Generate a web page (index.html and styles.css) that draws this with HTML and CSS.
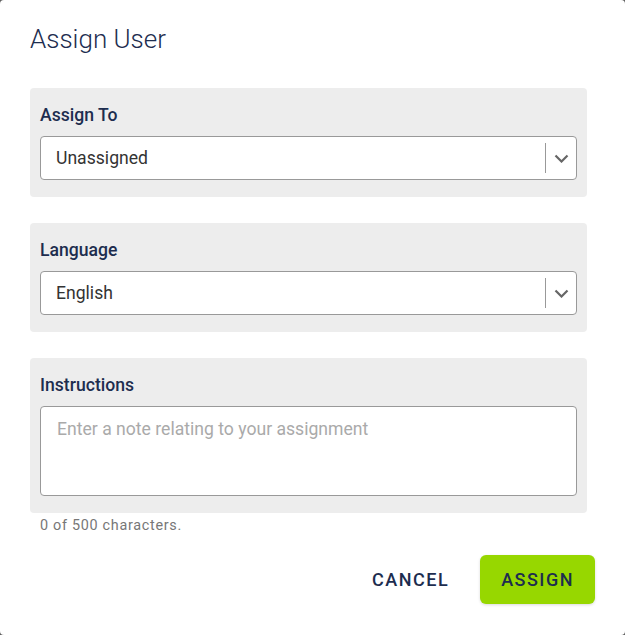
FILE: index.html
```html
<!DOCTYPE html>
<html lang="en">
<head>
    <meta charset="UTF-8">
    <title>Assign User</title>
    <link rel="stylesheet" href="styles.css">
</head>
<body>
    <div class="dialog">
        <h1 class="dialog-title">Assign User</h1>

        <!-- Assign to -->
        <div class="field">
            <label class="field-label">Assign To</label>
            <div class="select">
                <span class="select-value">Unassigned</span>
                <span class="select-arrow">
                    <svg width="15" height="9" viewBox="0 0 15 9"><polyline points="1.5,1.5 7.5,7.5 13.5,1.5" fill="none" stroke="#666" stroke-width="2.2"/></svg>
                </span>
            </div>
        </div>

        <!-- Language -->
        <div class="field">
            <label class="field-label">Language</label>
            <div class="select">
                <span class="select-value">English</span>
                <span class="select-arrow">
                    <svg width="15" height="9" viewBox="0 0 15 9"><polyline points="1.5,1.5 7.5,7.5 13.5,1.5" fill="none" stroke="#666" stroke-width="2.2"/></svg>
                </span>
            </div>
        </div>

        <!-- Instructions -->
        <div class="field field-last">
            <label class="field-label">Instructions</label>
            <textarea class="textarea" placeholder="Enter a note relating to your assignment"></textarea>
        </div>
        <p class="counter">0 of 500 characters.</p>

        <div class="actions">
            <button class="btn btn-text">CANCEL</button>
            <button class="btn btn-primary">ASSIGN</button>
        </div>
    </div>
</body>
</html>
```

FILE: styles.css
```css
/* General Styles */
body {
    margin: 0;
    background: #5f5f5f;
    font-family: Roboto, "Liberation Sans", sans-serif;
}

.dialog {
    height: 635px;
    box-sizing: border-box;
    background: #fff;
    border-radius: 4px;
    padding: 21px 30px 0;
}

.dialog-title {
    margin: 0 0 31px;
    font-size: 26px;
    line-height: 36px;
    font-weight: 300;
    color: #1d2d4f;
}

/* Fields */
.field {
    background: #ededed;
    border-radius: 4px;
    padding: 17px 10px;
    margin: 0 8px 26px 0;
    display: flex;
    flex-direction: column;
}

.field-last { margin-bottom: 0; }

.field-label {
    font-size: 17.6px;
    line-height: 20px;
    font-weight: 500;
    color: #1d2d4f;
    margin-bottom: 11px;
}

.select {
    height: 44px;
    box-sizing: border-box;
    background: #fff;
    border: 1px solid #999;
    border-radius: 4px;
    display: flex;
    align-items: center;
}

.select-value {
    flex: 1;
    padding-left: 15px;
    font-size: 17.6px;
    color: #333;
}

.select-arrow {
    width: 30px;
    height: 30px;
    border-left: 1px solid #999;
    display: flex;
    align-items: center;
    justify-content: center;
}

.textarea {
    display: block;
    height: 90px;
    box-sizing: border-box;
    border: 1px solid #999;
    border-radius: 4px;
    padding: 11px 16px;
    font-family: Roboto, "Liberation Sans", sans-serif;
    font-size: 17.6px;
    line-height: 22px;
    resize: none;
    outline: none;
}

.textarea::placeholder { color: #aaa; }

.counter {
    margin: 4px 0 0 10px;
    font-size: 14.4px;
    line-height: 17px;
    letter-spacing: 0.7px;
    color: #777;
}

/* Buttons */
.actions {
    display: flex;
    justify-content: flex-end;
    gap: 10px;
    margin-top: 21px;
}

.btn {
    height: 49px;
    padding: 0 21px;
    border: none;
    border-radius: 6px;
    background: none;
    font-family: Roboto, "Liberation Sans", sans-serif;
    font-size: 18px;
    font-weight: 500;
    letter-spacing: 1.5px;
    color: #1d2d4f;
}

.btn-primary {
    background: #97d700;
    box-shadow: 0 1px 3px rgba(0, 0, 0, 0.15);
}
```
